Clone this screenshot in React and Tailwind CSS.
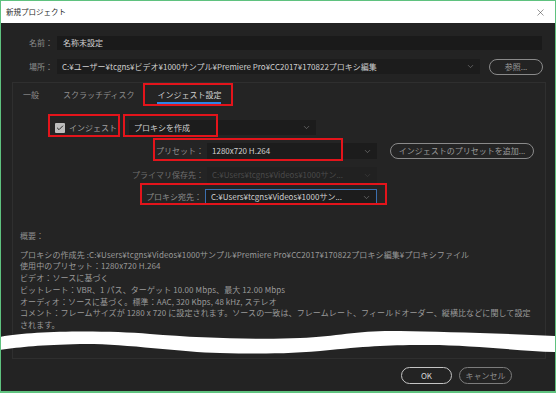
import { ChevronDown, X, Check } from 'lucide-react';

const jp = "font-['Noto_Sans_CJK_JP','Noto_Sans',sans-serif]";

function Select({ children, className = '', textClass = 'text-[#cfcfcf]', chevron = 'text-[#8a8a8a]' }) {
  return (
    <div className={`flex items-center bg-[#1c1c1c] pl-[5px] pr-[5px] ${className}`}>
      <span className={`flex-1 min-w-0 whitespace-nowrap overflow-hidden leading-[14px] ${textClass}`}>{children}</span>
      <ChevronDown size={9} strokeWidth={1.5} className={`shrink-0 ${chevron}`} />
    </div>
  );
}

function PillButton({ children, className = '' }) {
  return (
    <div className={`flex items-center justify-center rounded-full border-[1.5px] leading-[12px] whitespace-nowrap ${className}`}>
      {children}
    </div>
  );
}

const summary = [
  'プロキシの作成先 :C:¥Users¥tcgns¥Videos¥1000サンプル¥Premiere Pro¥CC2017¥170822プロキシ編集¥プロキシファイル',
  '使用中のプリセット：1280x720 H.264',
  'ビデオ：ソースに基づく',
  'ビットレート：VBR、1 パス、ターゲット 10.00 Mbps、最大 12.00 Mbps',
  'オーディオ：ソースに基づく。標準：AAC, 320 Kbps, 48 kHz, ステレオ',
  'コメント：フレームサイズが 1280 x 720 に設定されます。ソースの一致は、フレームレート、フィールドオーダー、縦横比などに関して設定',
  'されます。',
];

// 注釈の赤枠（スクリーンショット上のマーク）
const marks = [
  { left: 143, top: 83, w: 90, h: 23 },
  { left: 48, top: 114, w: 72, h: 23 },
  { left: 123, top: 114, w: 95, h: 23 },
  { left: 153, top: 138, w: 190, h: 23 },
  { left: 140, top: 183, w: 247, h: 22 },
];

export default function App() {
  return (
    <div className={`relative w-[556px] h-[393px] overflow-hidden border border-b-2 border-[#5fc27f] bg-[#232323] text-[8px] ${jp}`}>
      {/* Title bar */}
      <div className="flex items-center h-[22px] bg-white pl-[5px] pr-[9px]">
        <span className="flex-1 text-[7.5px] text-[#2a2a2a]">新規プロジェクト</span>
        <X size={11} strokeWidth={1.2} className="text-[#444]" />
      </div>

      {/* Name */}
      <div className="flex items-center h-[14px] mt-[13px] pr-[13px]">
        <span className="w-[56px] pr-[4px] text-right text-[#8d8d8d]">名前：</span>
        <div className="flex-1 h-full flex items-center bg-[#1a1a1a] pl-[6px] text-[#d0d0d0]">名称未設定</div>
      </div>

      {/* Location */}
      <div className="flex items-center h-[15px] mt-[9px] pr-[11px]">
        <span className="w-[56px] pr-[4px] text-right text-[#8d8d8d]">場所：</span>
        <Select className="w-[423px] h-full">C:¥ユーザー¥tcgns¥ビデオ¥1000サンプル¥Premiere Pro¥CC2017¥170822プロキシ編集</Select>
        <PillButton className="ml-[9px] w-[54px] h-[16px] border-[#8a8a8a] text-[#9a9a9a]">参照...</PillButton>
      </div>

      {/* Tab panel */}
      <div className="ml-[11px] mr-[9px] mt-[8px] h-[277px] border border-[#2f2f2f] bg-[#242424]">
        <div className="flex items-center h-[24px] pl-[10px] text-[#8d8d8d]">
          <span>一般</span>
          <span className="ml-[24px]">スクラッチディスク</span>
          <span className="ml-[23px] mt-[3px] pb-[1px] border-b-2 border-[#2d86e6] text-[#d2d2d2]">インジェスト設定</span>
        </div>

        <div className="flex items-center h-[15px] mt-[13px]">
          <div className="ml-[42px] w-[10px] h-[10px] flex items-center justify-center bg-[#bdbdbd] rounded-[1px]">
            <Check size={8} strokeWidth={3} className="text-[#2a2a2a]" />
          </div>
          <span className="ml-[4px] text-[#a0a0a0]">インジェスト</span>
          <Select className="ml-[12px] w-[187px] h-full">プロキシを作成</Select>
        </div>

        <div className="flex items-center h-[16px] mt-[8px]">
          <span className="w-[191px] text-right text-[#8d8d8d]">プリセット：</span>
          <Select className="ml-[3px] w-[170px] h-full">1280x720 H.264</Select>
          <PillButton className="ml-[13px] w-[144px] h-[16px] border-[#8a8a8a] text-[#9a9a9a]">インジェストのプリセットを追加...</PillButton>
        </div>

        <div className="flex items-center h-[16px] mt-[8px]">
          <span className="w-[191px] text-right text-[#6e6e6e]">プライマリ保存先：</span>
          <Select className="ml-[3px] w-[170px] h-full !bg-[#212121]" textClass="text-[#4a4a4a]" chevron="text-[#444]">C:¥Users¥tcgns¥Videos¥1000サン...</Select>
        </div>

        <div className="flex items-center h-[16px] mt-[6px]">
          <span className="w-[189px] text-right text-[#8d8d8d]">プロキシ宛先：</span>
          <Select className="ml-[3px] w-[172px] h-full border border-[#3b6fae]">C:¥Users¥tcgns¥Videos¥1000サン...</Select>
        </div>

        <div className="mt-[25px] pl-[7px] leading-[11.7px] text-[#8d8d8d]">概要：</div>
        <div className="mt-[7px] pl-[7px] leading-[11.7px] text-[#9a9a9a] tracking-[0.1px]">
          {summary.map(line => (
            <div key={line} className="whitespace-nowrap">{line}</div>
          ))}
        </div>
      </div>

      {/* Buttons */}
      <div className="flex justify-end gap-[7px] mt-[8px] pr-[43px]">
        <PillButton className="w-[51px] h-[17px] border-[#c4c4c4] text-[#d8d8d8]">OK</PillButton>
        <PillButton className="w-[53px] h-[17px] border-[#7c7c7c] text-[#8e8e8e]">キャンセル</PillButton>
      </div>

      {/* annotation boxes */}
      {marks.map(m => (
        <div
          key={`${m.left}-${m.top}`}
          className="absolute border-2 border-[#e3141b] pointer-events-none"
          style={{ left: m.left - 1, top: m.top - 1, width: m.w, height: m.h }}
        />
      ))}

      {/* torn-edge wave */}
      <svg className="absolute -left-px -top-px pointer-events-none" width="556" height="393" viewBox="0 0 556 393">
        <path
          d="M0,337 C30,331 100,330 150,334 S260,340 300,338 S360,330 400,331 S500,333 556,336 L556,352 C520,351 470,345 430,345 S370,346 330,350 S260,354 220,353 S120,343 80,344 S20,347 0,350 Z"
          fill="#fff"
        />
      </svg>
    </div>
  );
}
